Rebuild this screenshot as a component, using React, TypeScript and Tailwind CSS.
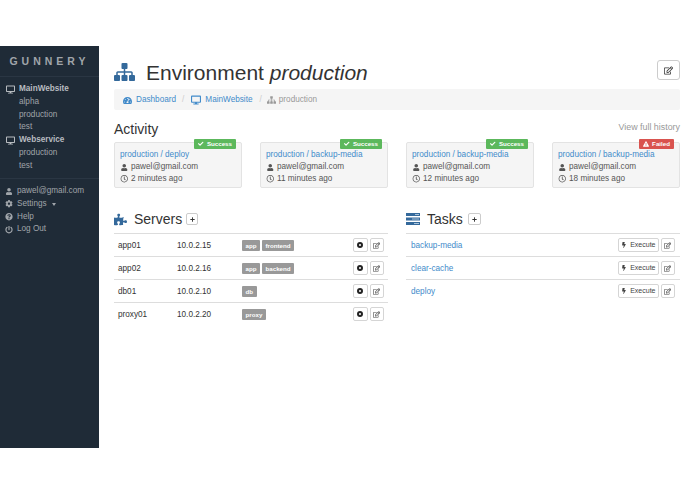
import { FaBolt, FaCheck, FaCog, FaDesktop, FaExclamationTriangle, FaPlus, FaPowerOff, FaPuzzlePiece, FaQuestionCircle, FaRegClock, FaRegEdit, FaTachometerAlt, FaUser } from "react-icons/fa";

const activity = [
  { title: "production / deploy", time: "2 minutes ago", failed: false },
  { title: "production / backup-media", time: "11 minutes ago", failed: false },
  { title: "production / backup-media", time: "12 minutes ago", failed: false },
  { title: "production / backup-media", time: "18 minutes ago", failed: true },
];

const servers = [
  { name: "app01", ip: "10.0.2.15", tags: ["app", "frontend"] },
  { name: "app02", ip: "10.0.2.16", tags: ["app", "backend"] },
  { name: "db01", ip: "10.0.2.10", tags: ["db"] },
  { name: "proxy01", ip: "10.0.2.20", tags: ["proxy"] },
];

const tasks = ["backup-media", "clear-cache", "deploy"];

function SmallButton({ children }: { children: React.ReactNode }) {
  return (
    <span className="flex h-[14px] min-w-[14.5px] items-center justify-center rounded-[2px] border border-[#d5d5d5] bg-white text-[#444]">
      {children}
    </span>
  );
}

function SitemapIcon({ className }: { className: string }) {
  return (
    <svg viewBox="0 128 1792 1536" className={className} fill="currentColor">
      <path d="M1792 1248v320q0 40-28 68t-68 28h-320q-40 0-68-28t-28-68v-320q0-40 28-68t68-28h96v-192h-512v192h96q40 0 68 28t28 68v320q0 40-28 68t-68 28h-320q-40 0-68-28t-28-68v-320q0-40 28-68t68-28h96v-192h-512v192h96q40 0 68 28t28 68v320q0 40-28 68t-68 28h-320q-40 0-68-28t-28-68v-320q0-40 28-68t68-28h96v-192q0-52 38-90t90-38h512v-192h-96q-40 0-68-28t-28-68v-320q0-40 28-68t68-28h320q40 0 68 28t28 68v320q0 40-28 68t-68 28h-96v192h512q52 0 90 38t38 90v192h96q40 0 68 28t28 68z" />
    </svg>
  );
}

function TasksIcon() {
  return (
    <svg viewBox="0 0 14 12" className="h-[12px] w-[14px]">
      <rect y="0" width="14" height="3" fill="#34699b" />
      <rect x="9" y="1" width="4" height="1" fill="#a9c3da" />
      <rect y="4.500" width="14" height="3" fill="#34699b" />
      <rect x="6" y="5.500" width="7" height="1" fill="#a9c3da" />
      <rect y="9" width="14" height="3" fill="#34699b" />
      <rect x="8" y="10" width="5" height="1" fill="#a9c3da" />
    </svg>
  );
}

function ActivityCard({ title, time, failed }: { title: string; time: string; failed: boolean }) {
  return (
    <div className="relative h-[46px] w-[128px] rounded-[2px] border border-[#e3e3e3] bg-[#f5f5f5] pl-[5px] pt-[5px] text-[8.2px] leading-[12px]">
      <span
        className={`absolute -top-[4px] right-[5px] flex h-[9.500px] items-center gap-[3px] rounded-[1px] px-[4px] text-[6.2px] font-bold leading-none text-white ${failed ? "bg-[#d9534f]" : "bg-[#5cb85c]"}`}
      >
        {failed ? <FaExclamationTriangle className="text-[6px]" /> : <FaCheck className="text-[5.500px]" />}
        {failed ? "Failed" : "Success"}
      </span>
      <a className="block pt-[1px] text-[#428bca]">{title}</a>
      <div className="flex items-center gap-[2.5px] text-[#555]">
        <FaUser className="w-[8.500px] text-[7px]" />
        pawel@gmail.com
      </div>
      <div className="flex items-center gap-[2.5px] text-[#555]">
        <FaRegClock className="w-[8.500px] text-[7.500px]" />
        {time}
      </div>
    </div>
  );
}

export default function App() {
  return (
    <div className="h-[494px] w-[695px] overflow-hidden bg-white pt-[46px] font-['Liberation_Sans',sans-serif] text-[#333]">
      <div className="flex h-[402px]">
        <aside className="w-[99px] shrink-0 bg-[#1f2b37] text-[8.2px] leading-[12.8px] text-[#a0a5aa]">
          <div className="flex h-[31px] items-center justify-center border-b border-[#2a3643] text-[10.500px] font-bold tracking-[4px]">
            GUNNERY
          </div>
          <div className="border-b border-[#2a3643] pb-[5px] pt-[6px]">
            <div className="flex items-center gap-[4px] pl-[6px] font-bold text-[#b8bcc0]">
              <FaDesktop className="w-[9px] text-[9px]" />
              MainWebsite
            </div>
            <div className="pl-[19px]">alpha</div>
            <div className="pl-[19px]">production</div>
            <div className="pl-[19px]">test</div>
            <div className="flex items-center gap-[4px] pl-[6px] font-bold text-[#b8bcc0]">
              <FaDesktop className="w-[9px] text-[9px]" />
              Webservice
            </div>
            <div className="pl-[19px]">production</div>
            <div className="pl-[19px]">test</div>
          </div>
          <div className="pt-[6.400px]">
            <div className="flex items-center gap-[4px] pl-[5px]">
              <FaUser className="w-[8px] text-[7px]" />
              pawel@gmail.com
            </div>
            <div className="flex items-center gap-[4px] pl-[5px]">
              <FaCog className="w-[8px] text-[7.500px]" />
              Settings
              <span className="ml-[1px] h-0 w-0 border-x-[2.5px] border-t-[3px] border-x-transparent border-t-[#a0a5aa]" />
            </div>
            <div className="flex items-center gap-[4px] pl-[5px]">
              <FaQuestionCircle className="w-[8px] text-[7.500px]" />
              Help
            </div>
            <div className="flex items-center gap-[4px] pl-[5px]">
              <FaPowerOff className="w-[8px] text-[7.500px]" />
              Log Out
            </div>
          </div>
        </aside>

        <main className="min-w-0 flex-1 pl-[15px] pr-[15px]">
          <div className="flex h-[43px] items-center pt-[9px]">
            <SitemapIcon className="h-[18px] w-[21px] text-[#34699b]" />
            <h1 className="ml-[11px] text-[21px] leading-none">
              Environment <em>production</em>
            </h1>
            <span className="-mt-[4px] ml-auto flex h-[20px] w-[23px] items-center justify-center rounded-[3px] border border-[#ccc] bg-white text-[9px]">
              <FaRegEdit />
            </span>
          </div>

          <div className="flex h-[21px] items-center rounded-[2px] bg-[#f5f5f5] pl-[9px] pt-[1px] text-[8.2px] text-[#428bca]">
            <FaTachometerAlt className="mr-[4px] text-[9px]" />
            Dashboard
            <span className="ml-[6px] mr-[7px] text-[#ccc]">/</span>
            <FaDesktop className="mr-[4px] text-[10px]" />
            MainWebsite
            <span className="ml-[7px] mr-[5px] text-[#ccc]">/</span>
            <span className="flex items-center text-[#999]">
              <SitemapIcon className="mr-[3px] h-[8px] w-[9px]" />
              production
            </span>
          </div>

          <div className="mt-[10px] flex items-start justify-between">
            <h2 className="text-[14px] leading-[18px]">Activity</h2>
            <a className="text-[8.900px] leading-[14px] text-[#999]">View full history</a>
          </div>

          <div className="mt-[4px] flex justify-between">
            {activity.map((a, i) => (
              <ActivityCard key={i} title={a.title} time={a.time} failed={a.failed} />
            ))}
          </div>

          <div className="mt-[22px] grid grid-cols-[274px_274px] justify-between">
            <section>
              <div className="flex h-[18px] items-center">
                <FaPuzzlePiece className="text-[13px] text-[#34699b]" />
                <h2 className="ml-[7px] text-[14px] leading-none">Servers</h2>
                <span className="ml-[4px] flex h-[12px] w-[12px] items-center justify-center rounded-[2px] border border-[#ccc] text-[5px]">
                  <FaPlus />
                </span>
              </div>
              <div className="mt-[5px] border-t border-[#ddd]">
                {servers.map((s) => (
                  <div key={s.name} className="flex h-[23px] items-center border-b border-[#ddd] pl-[4px] pr-[4px] text-[8.2px] last:border-b-transparent">
                    <span className="w-[59px] pt-[2px]">{s.name}</span>
                    <span className="w-[65px] pt-[2px]">{s.ip}</span>
                    <span className="flex gap-[2px]">
                      {s.tags.map((t) => (
                        <span key={t} className="rounded-[1px] bg-[#999] px-[3.5px] py-[2px] text-[6.2px] font-bold leading-[7px] text-white">
                          {t}
                        </span>
                      ))}
                    </span>
                    <span className="ml-auto flex gap-[2px]">
                      <SmallButton>
                        <span className="h-[6px] w-[6px] rounded-full border-[2px] border-[#222]" />
                      </SmallButton>
                      <SmallButton>
                        <FaRegEdit className="text-[7px]" />
                      </SmallButton>
                    </span>
                  </div>
                ))}
              </div>
            </section>

            <section>
              <div className="flex h-[18px] items-center">
                <TasksIcon />
                <h2 className="ml-[7px] text-[14px] leading-none">Tasks</h2>
                <span className="ml-[5px] flex h-[12px] w-[13px] items-center justify-center rounded-[2px] border border-[#ccc] text-[5px]">
                  <FaPlus />
                </span>
              </div>
              <div className="mt-[5px] border-t border-[#ddd]">
                {tasks.map((t) => (
                  <div key={t} className="flex h-[23px] items-center border-b border-[#ddd] pl-[5px] pr-[5px] text-[8.2px] last:border-b-transparent">
                    <a className="pt-[2px] text-[#428bca]">{t}</a>
                    <span className="ml-auto flex gap-[2px]">
                      <SmallButton>
                        <span className="flex items-center gap-[3px] px-[2px] text-[7px]">
                          <FaBolt className="text-[6px]" />
                          Execute
                        </span>
                      </SmallButton>
                      <SmallButton>
                        <FaRegEdit className="text-[7px]" />
                      </SmallButton>
                    </span>
                  </div>
                ))}
              </div>
            </section>
          </div>
        </main>
      </div>
    </div>
  );
}
